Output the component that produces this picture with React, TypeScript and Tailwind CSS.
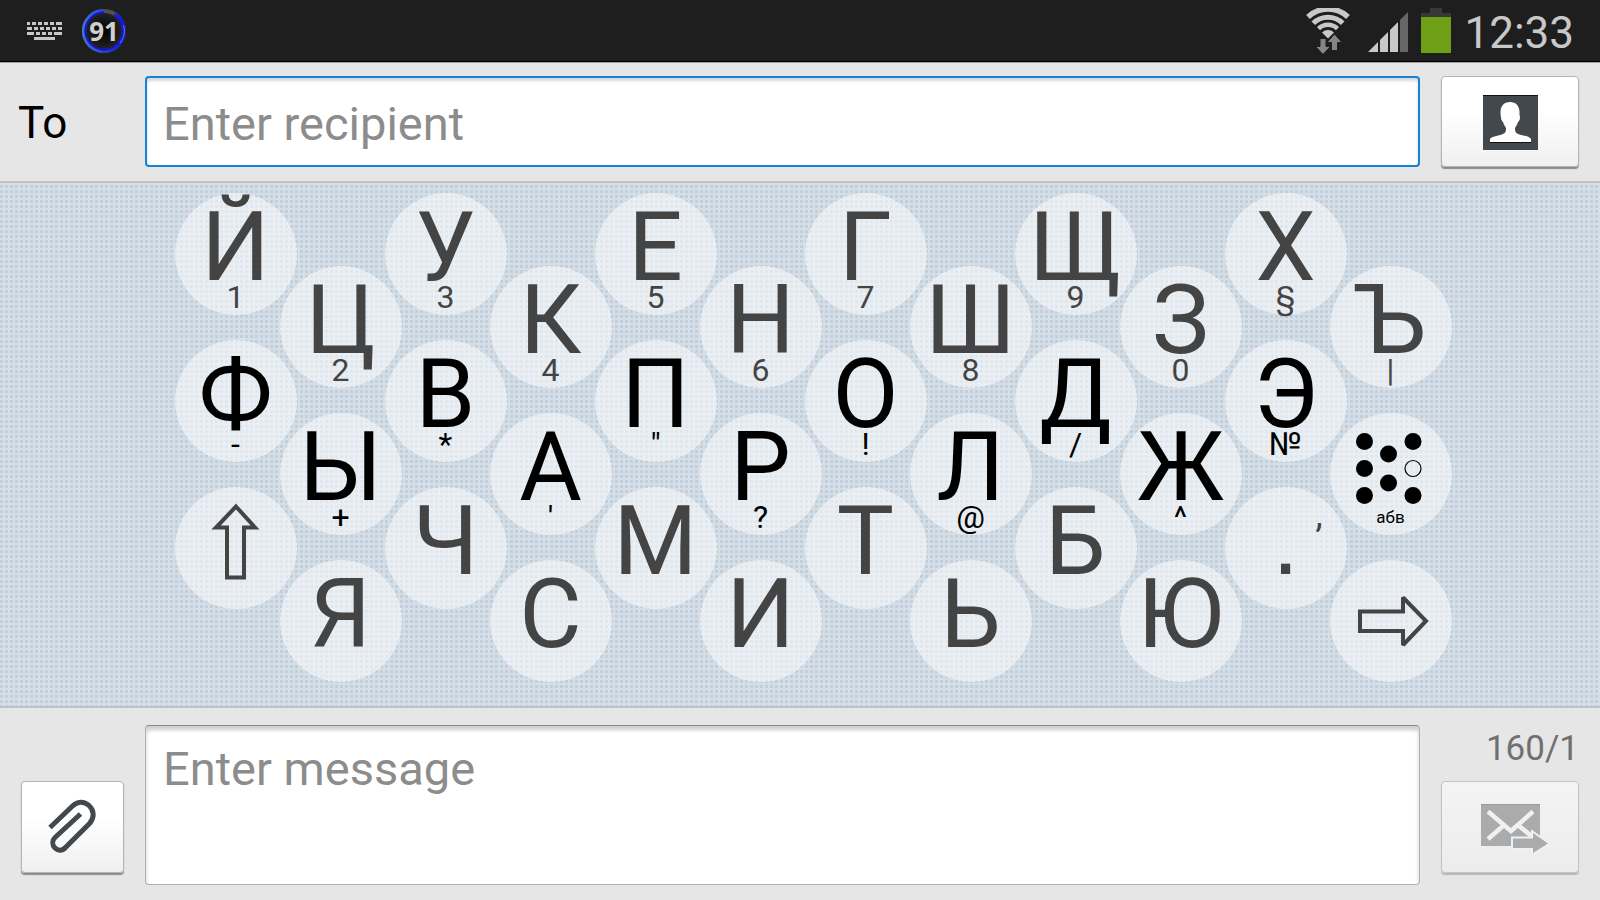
import React from 'react';

interface KeyDef {
  id: string;
  main?: string;
  hint?: string;
  kind?: 'shift' | 'enter' | 'layout' | 'period';
}

const columns: KeyDef[][] = [
  [{ id: 'k1', main: 'Й', hint: '1' }, { id: 'k2', main: 'Ф', hint: '-' }, { id: 'k3', kind: 'shift' }],
  [{ id: 'k4', main: 'Ц', hint: '2' }, { id: 'k5', main: 'Ы', hint: '+' }, { id: 'k6', main: 'Я' }],
  [{ id: 'k7', main: 'У', hint: '3' }, { id: 'k8', main: 'В', hint: '*' }, { id: 'k9', main: 'Ч' }],
  [{ id: 'k10', main: 'К', hint: '4' }, { id: 'k11', main: 'А', hint: "'" }, { id: 'k12', main: 'С' }],
  [{ id: 'k13', main: 'Е', hint: '5' }, { id: 'k14', main: 'П', hint: '"' }, { id: 'k15', main: 'М' }],
  [{ id: 'k16', main: 'Н', hint: '6' }, { id: 'k17', main: 'Р', hint: '?' }, { id: 'k18', main: 'И' }],
  [{ id: 'k19', main: 'Г', hint: '7' }, { id: 'k20', main: 'О', hint: '!' }, { id: 'k21', main: 'Т' }],
  [{ id: 'k22', main: 'Ш', hint: '8' }, { id: 'k23', main: 'Л', hint: '@' }, { id: 'k24', main: 'Ь' }],
  [{ id: 'k25', main: 'Щ', hint: '9' }, { id: 'k26', main: 'Д', hint: '/' }, { id: 'k27', main: 'Б' }],
  [{ id: 'k28', main: 'З', hint: '0' }, { id: 'k29', main: 'Ж', hint: '^' }, { id: 'k30', main: 'Ю' }],
  [{ id: 'k31', main: 'Х', hint: '§' }, { id: 'k32', main: 'Э', hint: '№' }, { id: 'k33', kind: 'period' }],
  [{ id: 'k34', main: 'Ъ', hint: '|' }, { id: 'k35', kind: 'layout' }, { id: 'k36', kind: 'enter' }],
];

const KeyboardIcon = () => (
  <svg width="38" height="22" viewBox="0 0 38 22" fill="#c8c8c8">
    <path d="M1 2h3v3H1zM6 2h4v3H6zM12 2h4v3h-4zM18 2h4v3h-4zM24 2h4v3h-4zM30 2h6v3h-6z" />
    <path d="M1 7h5v3H1zM8 7h4v3H8zM14 7h4v3h-4zM20 7h4v3h-4zM26 7h4v3h-4zM32 7h4v3h-4z" />
    <path d="M1 12h7v3H1zM10 12h4v3h-4zM16 12h4v3h-4zM22 12h4v3h-4zM28 12h8v3h-8z" />
    <path d="M8 17h21v3H8z" />
  </svg>
);

const BatteryBadge = () => (
  <div className="relative flex h-11 w-11 items-center justify-center">
    <svg width="44" height="44" viewBox="0 0 44 44" className="absolute inset-0">
      <defs>
        <radialGradient id="badge">
          <stop offset="0" stopColor="#000" />
          <stop offset="1" stopColor="#262626" />
        </radialGradient>
        <linearGradient id="ring">
          <stop offset="0" stopColor="#3f72d4" />
          <stop offset="1" stopColor="#1414cf" />
        </linearGradient>
      </defs>
      <circle cx="22" cy="22" r="20" fill="url(#badge)" stroke="#505050" strokeWidth="4" />
      <path d="M22 3A19 19 0 1 0 32.200 6" fill="none" stroke="#1414cf" strokeWidth="2.500" />
      <path d="M22 1.200A20.800 20.800 0 1 0 33.200 4.500" fill="none" stroke="url(#ring)" strokeWidth="2.500" />
      <path d="M41.500 16A20 20 0 0 1 38 34" fill="none" stroke="#4f83d8" strokeWidth="1" />
    </svg>
    <span className="relative text-[26px] leading-none font-bold text-[#d0d0d0] [font-family:'Noto_Sans','Open_Sans',sans-serif]">91</span>
  </div>
);

const WifiIcon = () => (
  <svg width="44" height="46" viewBox="0 0 44 46">
    <g fill="none" stroke="#c8c8c8">
      <path d="M2 9A29 29 0 0 1 42 9" strokeWidth="5.500" />
      <path d="M7.300 15.200A21 21 0 0 1 36.700 15.200" strokeWidth="5" />
      <path d="M12.500 20.700A13.500 13.500 0 0 1 31.500 20.700" strokeWidth="4.500" />
    </g>
    <path d="M16 24.500a8.500 8.500 0 0 1 12 0L22 30.500z" fill="#c8c8c8" />
    <path d="M14 30.500h6v8h4.500l-7.500 8-7.500-8H14zM25.500 42.500h6v-8H36l-7.500-8.500-7.500 8.500h4.500z" fill="#858585" stroke="#1e1e1e" strokeWidth="1" />
  </svg>
);

const SignalIcon = () => (
  <svg width="42" height="41" viewBox="0 0 42 41">
    <path d="M0 40L10 30V40zM12 40V28L20 20V40zM22 40V18L30 10V40z" fill="#c8c8c8" />
    <path d="M32 40V8L40 0V40z" fill="#666" />
  </svg>
);

const BatteryIcon = () => (
  <svg width="30" height="45" viewBox="0 0 30 45">
    <path d="M9 0h12v5h9v5H0V5h9z" fill="#383838" />
    <path d="M0 9h30v36H0z" fill="#6f9e17" />
  </svg>
);

const ContactIcon = () => (
  <svg width="55" height="55" viewBox="0 0 55 55">
    <path d="M0 0h55v55H0z" fill="#42484c" />
    <path d="M0 0h55v1H0z" fill="#111" />
    <path d="M7 47h41v1H7z" fill="#111" />
    <path d="M27 7c6 0 9.500 4 9.500 10 0 2 0 3 .5 5 0 3-1 4-2 5-1 3-2 4-3 6 0 4 1 5 3 6 6 2 11 2 13 5v3H7v-3c2-3 8-3 13-5 2-1 3-2 3-6-1-2-2-3-3-6-1-1-2-2-2-5-.5-2-.5-3-.5-5C17.500 11 21 7 27 7z" fill="#fff" />
  </svg>
);

const ClipIcon = () => (
  <svg width="50" height="56" viewBox="0 0 50 56" fill="none">
    <path d="M2 28.500L24 7.500C29 2 36 2 41 6.500C46.500 11.500 46.500 19 41.500 24.500L17.500 48.500C14.500 52 10 52 7 49C4 46 4 41.500 7 38.500L32.500 15" stroke="#42484c" strokeWidth="5" />
  </svg>
);

const SendIcon = () => (
  <svg width="68" height="50" viewBox="0 0 68 50">
    <path d="M0 0h59v42H0z" fill="#a9abad" />
    <path d="M0 0h59v1H0z" fill="#999" />
    <path d="M7 7.500L30 27 52 7.500M7 35L22 22M38 22L53 34" fill="none" stroke="#f1f1f1" strokeWidth="4.500" />
    <path d="M32 34.500H52V29L67 39.500 52 49V44H32z" fill="#a9abad" stroke="#f1f1f1" strokeWidth="4" paintOrder="stroke" />
  </svg>
);

const UpArrow = () => (
  <svg width="50" height="78" viewBox="0 0 50 78" fill="none" stroke="#444" strokeWidth="4">
    <path d="M25 3.500L44 24.500H33V74.500H16V24.500H5z" />
  </svg>
);

const RightArrow = () => (
  <svg width="72" height="52" viewBox="0 0 72 52" fill="none" stroke="#444" strokeWidth="4">
    <path d="M3 16.500H46V2.500L69 26 46 50V36H3z" strokeMiterlimit="2" />
  </svg>
);

const BrailleDots = () => (
  <svg width="66" height="72" viewBox="0 0 66 72">
    {[[8.5, 8.5], [8.5, 35.5], [8.5, 62.5], [32.5, 21], [32.5, 50], [57, 8.5], [57, 62.5]].map(([cx, cy]) => (
      <circle key={`${cx}-${cy}`} cx={cx} cy={cy} r="8.500" />
    ))}
    <circle cx="57" cy="35.500" r="8" fill="none" stroke="#000" strokeWidth="1.200" />
  </svg>
);

const Key: React.FC<{ def: KeyDef; home: boolean }> = ({ def, home }) => {
  const tone = home ? 'text-black' : 'text-[#444]';
  const base = 'flex h-[122px] w-[122px] shrink-0 flex-col items-center rounded-full bg-white/50';

  if (def.kind === 'shift') {
    return <button aria-label="Shift" className={`${base} pt-4`}><UpArrow /></button>;
  }
  if (def.kind === 'enter') {
    return <button aria-label="Enter" className={`${base} justify-center pl-1`}><RightArrow /></button>;
  }
  if (def.kind === 'layout') {
    return (
      <button className={`${base} pt-5 pr-1`}>
        <BrailleDots />
        <span className="pl-1 text-[17px] leading-6">абв</span>
      </button>
    );
  }
  if (def.kind === 'period') {
    return (
      <button className={`${base} relative text-[#444]`}>
        <span className="text-8xl leading-[108px]">
          <span className="leading-none [font-family:'Liberation_Sans',sans-serif]">.</span>
        </span>
        <span className="absolute top-3 right-6 text-4xl leading-8">,</span>
      </button>
    );
  }
  return (
    // the glyph may reach past the circle's sides, but is cut at its top
    <button className={`${base} ${tone} [clip-path:inset(0_-8px_-8px)]`}>
      <span className="text-8xl leading-[108px]">{def.main}</span>
      <span className="-mt-5 text-[32px] leading-8">{def.hint}</span>
    </button>
  );
};

const raised = 'flex items-center justify-center rounded-[4px] border bg-linear-to-b';
const enabled = 'border-[#b4b4b4] from-white from-40% to-[#f0f0f0] shadow-[0_2px_1px_rgba(0,0,0,0.4)]';

const App: React.FC = () => {
  return (
    <div className="flex min-h-screen flex-col bg-[#e6e6e6] [font-family:Roboto,sans-serif]">
      <header className="flex h-[62px] shrink-0 items-center border-b border-black bg-[#1e1e1e] pr-[26px] pl-[26px]">
        <KeyboardIcon />
        <div className="ml-[18px]"><BatteryBadge /></div>
        <div className="ml-auto flex items-center">
          <WifiIcon />
          <div className="ml-[18px] pt-1"><SignalIcon /></div>
          <div className="ml-[11px]"><BatteryIcon /></div>
          <time className="ml-[13px] pt-1 text-[44px] leading-none text-[#c8c8c8]">12:33</time>
        </div>
      </header>

      <div className="flex shrink-0 items-center border-t border-[#a0a0a0] pt-[13px] pr-[21px] pb-[14px] pl-[18px]">
        <label htmlFor="recipient" className="w-[127px] pt-[2px] text-[44px] leading-none">To</label>
        <input
          id="recipient"
          type="text"
          placeholder="Enter recipient"
          className="h-[91px] min-w-0 flex-1 rounded-[4px] border-2 border-[#1484d6] bg-white px-4 pt-1 text-[47px] shadow-[inset_0_3px_3px_rgba(0,0,0,0.15)] outline-none placeholder:text-[#8c8c8c]"
        />
        <button aria-label="Contacts" className={`${raised} ${enabled} ml-[21px] h-[91px] w-[138px] pt-[2px]`}>
          <ContactIcon />
        </button>
      </div>

      <main className="flex flex-1 justify-center border-y-2 border-[#bfc3c6] bg-[#c2ced9] bg-[repeating-linear-gradient(90deg,transparent_0_3px,#d4dfe8_3px_5px),repeating-linear-gradient(#d4dfe8_0_2px,transparent_2px_5px)] pt-[10px] pl-[26px]">
        {columns.map((column, i) => (
          <div key={column[0].id} className={`flex w-[105px] flex-col items-center gap-[25px] ${i % 2 ? 'pt-[73px]' : ''}`}>
            {column.map((def, row) => (
              <Key key={def.id} def={def} home={row === 1} />
            ))}
          </div>
        ))}
      </main>

      <div className="flex shrink-0 items-end pt-[17px] pr-[21px] pb-[15px] pl-[21px]">
        <button aria-label="Attach" className={`${raised} ${enabled} mb-3 h-[92px] w-[103px]`}>
          <ClipIcon />
        </button>
        <textarea
          aria-label="Message"
          placeholder="Enter message"
          className="ml-[21px] h-[160px] min-w-0 flex-1 resize-none rounded-[4px] border border-[#b0b0b0] border-t-[#888] bg-white px-[17px] pt-[15px] text-[47px] leading-[56px] shadow-[inset_0_4px_4px_rgba(0,0,0,0.2)] outline-none placeholder:text-[#8c8c8c]"
        />
        <div className="mb-3 ml-[21px] flex w-[138px] flex-col items-end">
          <span className="mb-3 text-[35px] leading-10 text-[#707070]">160/1</span>
          <button aria-label="Send" className={`${raised} h-[92px] w-full border-[#c4c4c4] from-[#f4f4f4] to-[#ececec] pt-1 pl-[10px] shadow-[0_2px_1px_rgba(0,0,0,0.2)]`}>
            <SendIcon />
          </button>
        </div>
      </div>
    </div>
  );
};

export default App;
